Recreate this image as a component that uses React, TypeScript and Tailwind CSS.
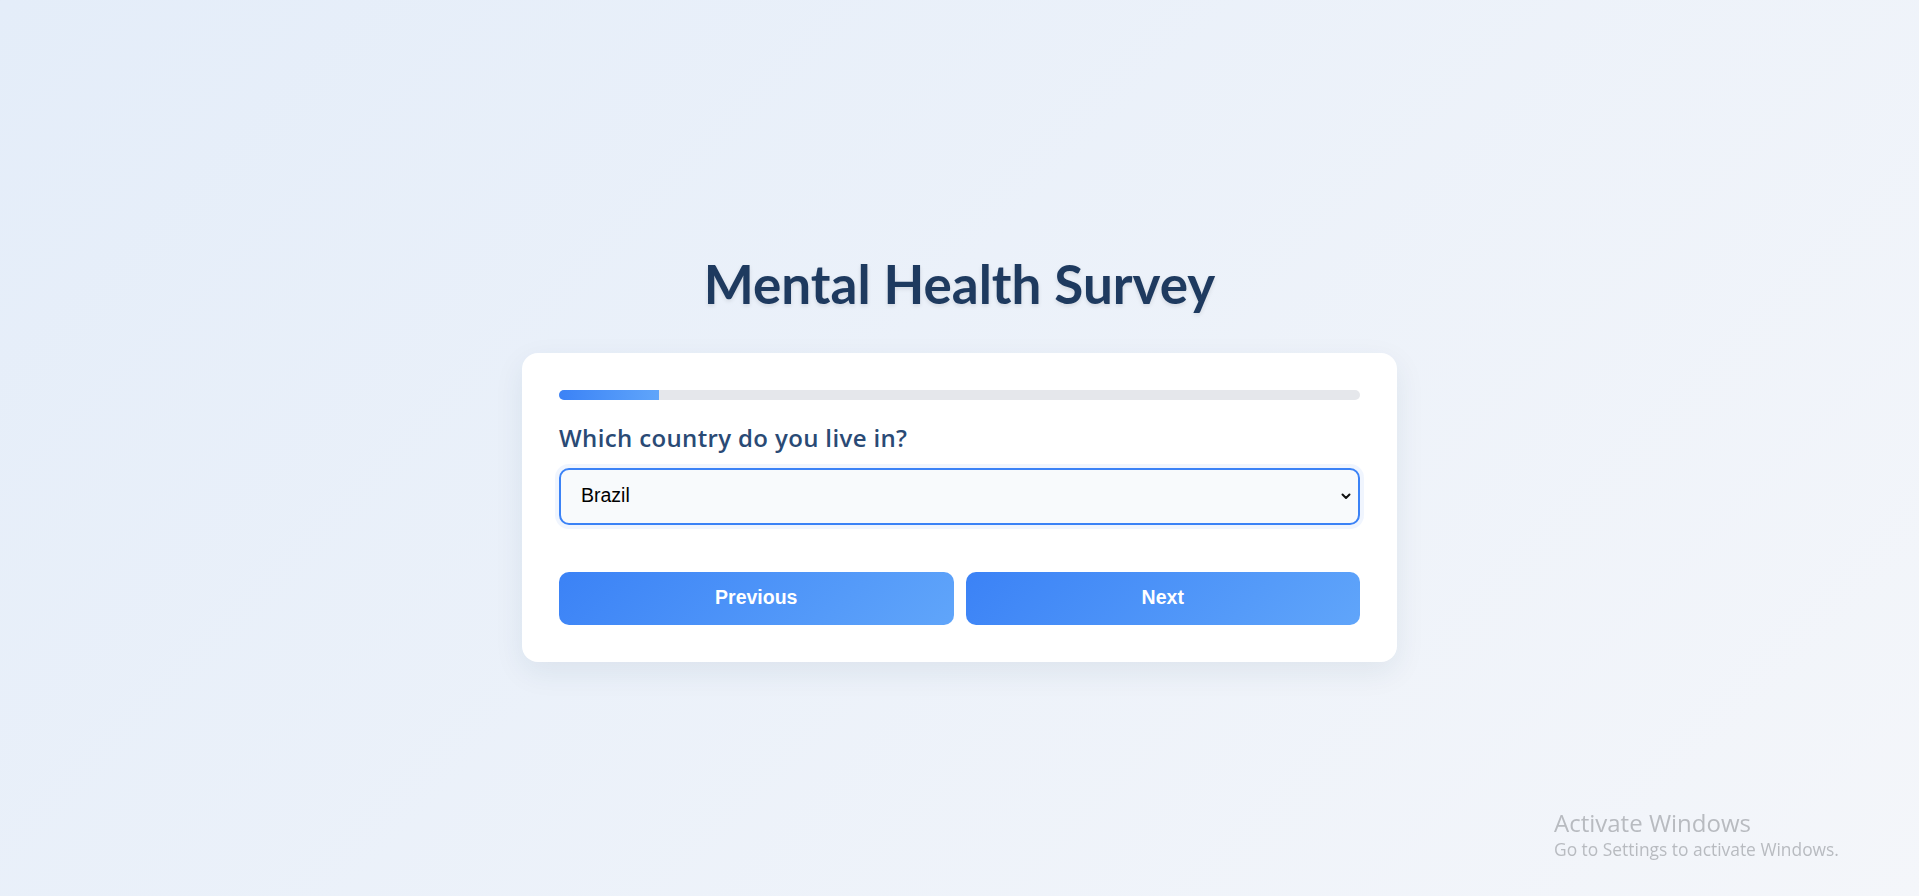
import React, { useState } from 'react';

const COUNTRIES = ['United States', 'Canada', 'Brazil', 'United Kingdom', 'Germany', 'India', 'Australia'];

const App: React.FC = () => {
  const [country, setCountry] = useState('Brazil');
  const step = 1;
  const total = 8;

  return (
    <div className="relative min-h-screen w-full bg-linear-135 from-[#e4edf9] to-[#f4f6fa] font-['Open_Sans','Noto_Sans',sans-serif]">
      <div className="flex min-h-screen flex-col items-center pt-[252px]">
        {/* Title */}
        <h1 className="mb-[37px] font-['Lato','Open_Sans',sans-serif] text-[53px] leading-[1.2] font-bold text-[#1e3a5f] [text-shadow:0_2px_4px_rgba(0,0,0,0.1)]">
          Mental Health Survey
        </h1>

        {/* Survey card */}
        <div className="w-[875px] rounded-2xl bg-white p-[37px] shadow-[0_10px_30px_rgba(30,58,95,0.08)]">
          <div className="mb-5 h-2.5 w-full overflow-hidden rounded-full bg-[#e5e7eb]">
            <div
              className="h-full bg-linear-to-r from-[#3b82f6] to-[#60a5fa]"
              style={{ width: `${(step / total) * 100}%` }}
            />
          </div>

          <label className="mb-3 block text-[24px] leading-[1.5] font-semibold tracking-[0.015em] text-[#2a4a75]">
            Which country do you live in?
          </label>

          <div className="relative">
            <select
              value={country}
              onChange={e => setCountry(e.target.value)}
              className="h-[57px] w-full appearance-none rounded-[10px] border-2 border-[#3b82f6] bg-[#f8fafc] pl-[20px] pr-10 font-['Liberation_Sans',Arial,sans-serif] text-[19.5px] text-black shadow-[0_0_0_4px_rgba(59,130,246,0.08)] outline-none"
            >
              {COUNTRIES.map(c => (
                <option key={c} value={c}>{c}</option>
              ))}
            </select>
            <svg
              className="pointer-events-none absolute top-1/2 right-[8px] -translate-y-1/2"
              width="12"
              height="12"
              viewBox="0 0 12 12"
              fill="none"
              stroke="#111"
              strokeWidth="2"
              strokeLinecap="round"
              strokeLinejoin="round"
            >
              <path d="M2.5 4.5 L6 8 L9.5 4.5" />
            </svg>
          </div>

          <div className="mt-[47px] flex gap-3">
            <button className="h-[53px] flex-1 rounded-[10px] bg-linear-135 from-[#3b82f6] to-[#60a5fa] font-['Liberation_Sans',Arial,sans-serif] text-[19.5px] font-bold text-white">
              Previous
            </button>
            <button className="h-[53px] flex-1 rounded-[10px] bg-linear-135 from-[#3b82f6] to-[#60a5fa] font-['Liberation_Sans',Arial,sans-serif] text-[19.5px] font-bold text-white">
              Next
            </button>
          </div>
        </div>
      </div>

      {/* Windows watermark */}
      <div className="pointer-events-none fixed right-[60px] bottom-[35px] w-[305px] text-[#b8bbc0]">
        <p className="text-[24px] leading-[1.2]">Activate Windows</p>
        <p className="text-[17.4px] leading-[1.35]">Go to Settings to activate Windows.</p>
      </div>
    </div>
  );
};

export default App;
